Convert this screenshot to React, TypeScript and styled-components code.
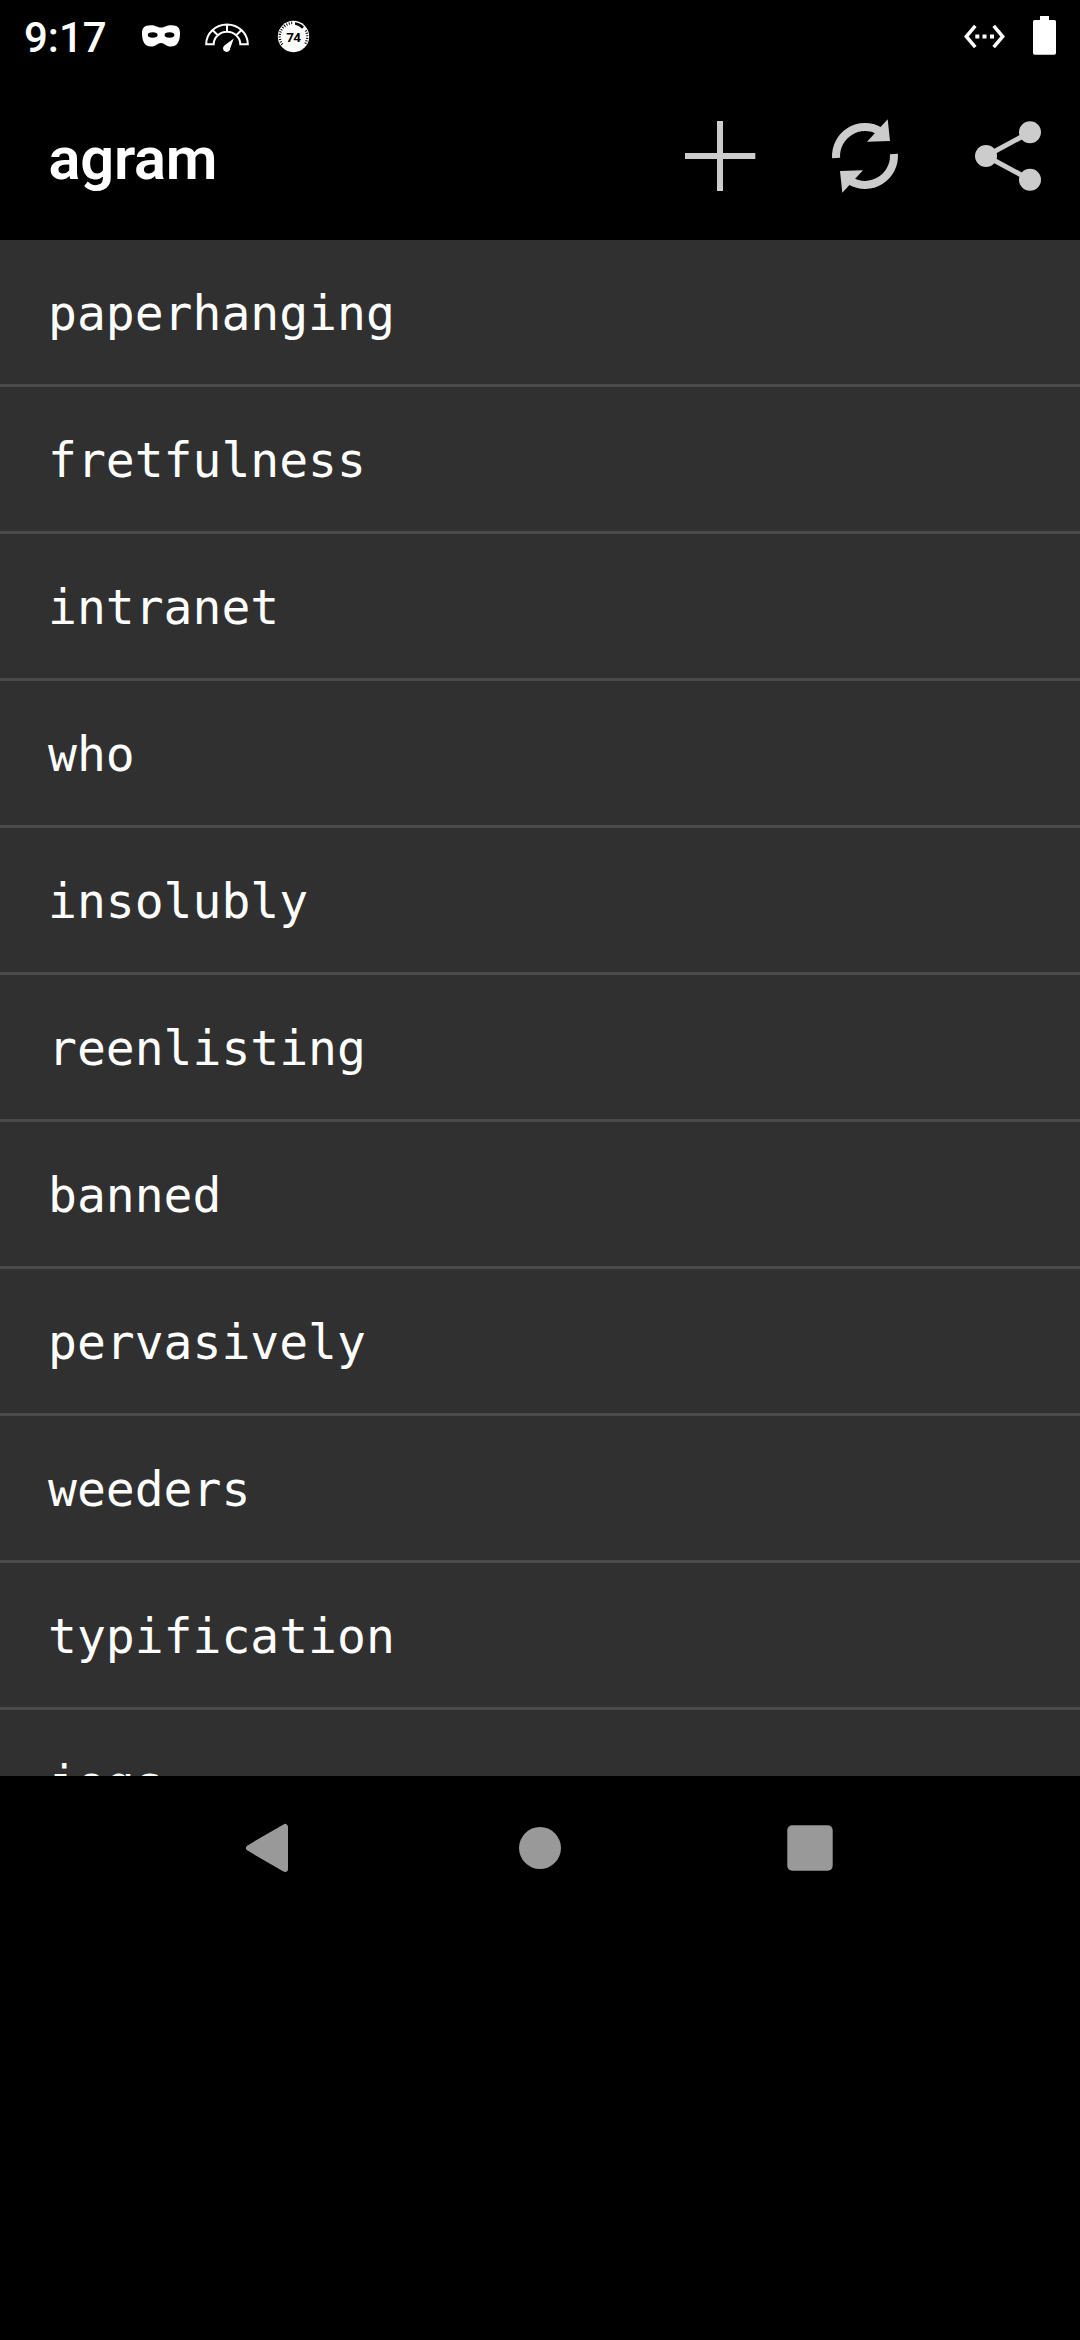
import React from "react";
import styled, { createGlobalStyle } from "styled-components";

const GlobalStyle = createGlobalStyle`
  * { box-sizing: border-box; }
  html, body { margin: 0; background: #000; }
`;

const Screen = styled.div`
  display: flex;
  flex-direction: column;
  width: 1080px;
  height: 2340px;
  overflow: hidden;
  background: #000;
  color: #fff;
  font-family: Roboto, "Liberation Sans", sans-serif;
`;

const StatusBar = styled.header`
  display: flex;
  align-items: center;
  height: 72px;
  padding: 0 24px;
`;

const Clock = styled.time`
  width: 117px;
  font-size: 42px;
  font-weight: 500;
  line-height: 72px;
  padding-top: 3px;
`;

const StatusIcon = styled.svg<{ $w: number; $gap?: number }>`
  flex: none;
  display: block;
  width: ${(p) => p.$w}px;
  height: 72px;
  margin-left: ${(p) => p.$gap ?? 0}px;
`;

const Spacer = styled.div`
  flex: 1;
`;

const Toolbar = styled.div`
  display: flex;
  align-items: center;
  height: 168px;
  padding-left: 48.5px;
`;

const Title = styled.h1`
  flex: 1;
  margin: 0;
  font-size: 59.5px;
  font-weight: 600;
  line-height: 70px;
  letter-spacing: -0.2px;
  padding-top: 5px;
`;

const Action = styled.button`
  width: 144px;
  height: 168px;
  padding: 0;
  border: 0;
  background: none;
  color: #cccccc;
`;

const ActionIcon = styled.svg`
  display: block;
  width: 144px;
  height: 168px;
`;

const WordList = styled.ul`
  flex: none;
  height: 1536px;
  margin: 0;
  padding: 0;
  overflow: hidden;
  list-style: none;
  background: #303030;
`;

const Word = styled.li`
  height: 147px;
  padding: 1px 48px 0;
  border-bottom: 3px solid #4a4a4a;
  font-family: "DejaVu Sans Mono", monospace;
  font-size: 48px;
  line-height: 144px;
`;

const NavBar = styled.nav`
  display: flex;
  justify-content: center;
  height: 144px;
`;

const NavButton = styled.button`
  width: 270px;
  height: 144px;
  padding: 0;
  border: 0;
  background: none;
  color: #999999;
`;

const NavIcon = styled.svg`
  display: block;
  width: 270px;
  height: 144px;
`;

const BadgeText = styled.text`
  font: 700 13.5px Roboto, sans-serif;
  letter-spacing: -0.7px;
`;

const words = [
  "paperhanging",
  "fretfulness",
  "intranet",
  "who",
  "insolubly",
  "reenlisting",
  "banned",
  "pervasively",
  "weeders",
  "typification",
  "jogs",
];

const MaskIcon = () => (
  <StatusIcon $w={40} viewBox="141 0 40 72">
    <path
      fill="#fff"
      fillRule="evenodd"
      d="M150.500 25.300C156 25.300 157.500 27.600 161 27.600C164.500 27.600 166 25.300 171.500 25.300C177.500 25.300 180 28 180 33C180 41 177.500 46.600 171 46.600C166 46.600 164.500 43 161 43C157.500 43 156 46.600 151 46.600C144.500 46.600 142 41 142 33C142 28 144.500 25.300 150.500 25.300ZM147.800 35A4.900 2.700 0 1 0 157.600 35A4.900 2.700 0 1 0 147.800 35ZM164.600 35A4.900 2.700 0 1 0 174.400 35A4.900 2.700 0 1 0 164.600 35Z"
    />
  </StatusIcon>
);

const GaugeIcon = () => (
  <StatusIcon $w={46} $gap={23} viewBox="204 0 46 72">
    <path
      fill="none"
      stroke="#fff"
      strokeWidth="2"
      d="M206.200 44.200A20.800 19.800 0 0 1 247.800 44.200H240.300A13.300 12.400 0 0 0 213.700 44.200ZM227 24.500V31.700M212.500 30L217.500 35M241.500 30L236.500 35"
    />
    <path fill="#fff" d="M233.800 38.500L230.200 48.200A3.600 3.600 0 1 1 224.400 45.500Z" />
  </StatusIcon>
);

const ScoreIcon = () => (
  <StatusIcon $w={34} $gap={26} viewBox="276 0 34 72">
    <circle cx="293.500" cy="36.500" r="15.700" fill="#fff" />
    <path
      fill="none"
      stroke="#000"
      strokeWidth="2.400"
      strokeDasharray="1 1.500"
      d="M282.300 44.500A13.600 13.600 0 0 1 293.500 22.900"
    />
    <path
      fill="none"
      stroke="#000"
      strokeWidth="2.400"
      strokeDasharray="1 1.500"
      d="M305.800 30.500A13.600 13.600 0 0 1 304.700 44.500"
    />
    <path fill="#000" d="M295 22.300A14.300 14.300 0 0 1 304 26.800L302 28.800Q299 25.500 295 24.800Z" />
    <BadgeText x="293.300" y="41.700" textAnchor="middle" fill="#000">
      74
    </BadgeText>
  </StatusIcon>
);

const EthernetIcon = () => (
  <StatusIcon $w={44} viewBox="963 0 44 72">
    <path
      fill="none"
      stroke="#fff"
      strokeWidth="3.500"
      d="M975.300 25.800L966.300 36.500L975.300 47.200M993.700 25.800L1002.700 36.500L993.700 47.200"
    />
    <path
      fill="#fff"
      d="M975.300 34.500H979.300V38.500H975.300ZM982.500 34.500H986.500V38.500H982.500ZM990 34.500H994V38.500H990Z"
    />
  </StatusIcon>
);

const BatteryIcon = () => (
  <StatusIcon $w={24} $gap={25} viewBox="1032 0 24 72">
    <path
      fill="#fff"
      d="M1040 16H1049V20H1054.500Q1056 20 1056 21.500V53Q1056 54.700 1054.300 54.700H1034.700Q1033 54.700 1033 53V21.500Q1033 20 1034.500 20H1040Z"
    />
  </StatusIcon>
);

export default function App() {
  return (
    <Screen>
      <GlobalStyle />
      <StatusBar>
        <Clock>9:17</Clock>
        <MaskIcon />
        <GaugeIcon />
        <ScoreIcon />
        <Spacer />
        <EthernetIcon />
        <BatteryIcon />
      </StatusBar>
      <Toolbar>
        <Title>agram</Title>
        <Action aria-label="Add">
          <ActionIcon viewBox="648 72 144 168">
            <path fill="currentColor" d="M717 121H723V153H755.300V159H723V191H717V159H685V153H717Z" />
          </ActionIcon>
        </Action>
        <Action aria-label="Refresh">
          <ActionIcon viewBox="792 72 144 168">
            <g id="half">
              <path
                fill="none"
                stroke="currentColor"
                strokeWidth="8"
                d="M836.070 158A29 29 0 0 1 879.500 131"
              />
              <path fill="currentColor" d="M887.700 119.300L890 141L867 141.700Z" />
            </g>
            <use href="#half" transform="rotate(180 865 156)" />
          </ActionIcon>
        </Action>
        <Action aria-label="Share">
          <ActionIcon viewBox="936 72 144 168">
            <path
              fill="none"
              stroke="currentColor"
              strokeWidth="5"
              d="M1030 132.300L986 156L1030 179.700"
            />
            <circle cx="986" cy="156" r="11" fill="currentColor" />
            <circle cx="1030" cy="132.300" r="11" fill="currentColor" />
            <circle cx="1030" cy="179.700" r="11" fill="currentColor" />
          </ActionIcon>
        </Action>
      </Toolbar>
      <WordList>
        {words.map((word) => (
          <Word key={word}>{word}</Word>
        ))}
      </WordList>
      <NavBar>
        <NavButton aria-label="Back">
          <NavIcon viewBox="135 1776 270 144">
            <path
              fill="currentColor"
              stroke="currentColor"
              strokeWidth="6"
              strokeLinejoin="round"
              d="M249 1848L285 1827V1869Z"
            />
          </NavIcon>
        </NavButton>
        <NavButton aria-label="Home">
          <NavIcon viewBox="405 1776 270 144">
            <circle cx="540" cy="1848" r="21" fill="currentColor" />
          </NavIcon>
        </NavButton>
        <NavButton aria-label="Recents">
          <NavIcon viewBox="675 1776 270 144">
            <rect x="787.300" y="1825.300" width="45.400" height="45.400" rx="5" fill="currentColor" />
          </NavIcon>
        </NavButton>
      </NavBar>
    </Screen>
  );
}
